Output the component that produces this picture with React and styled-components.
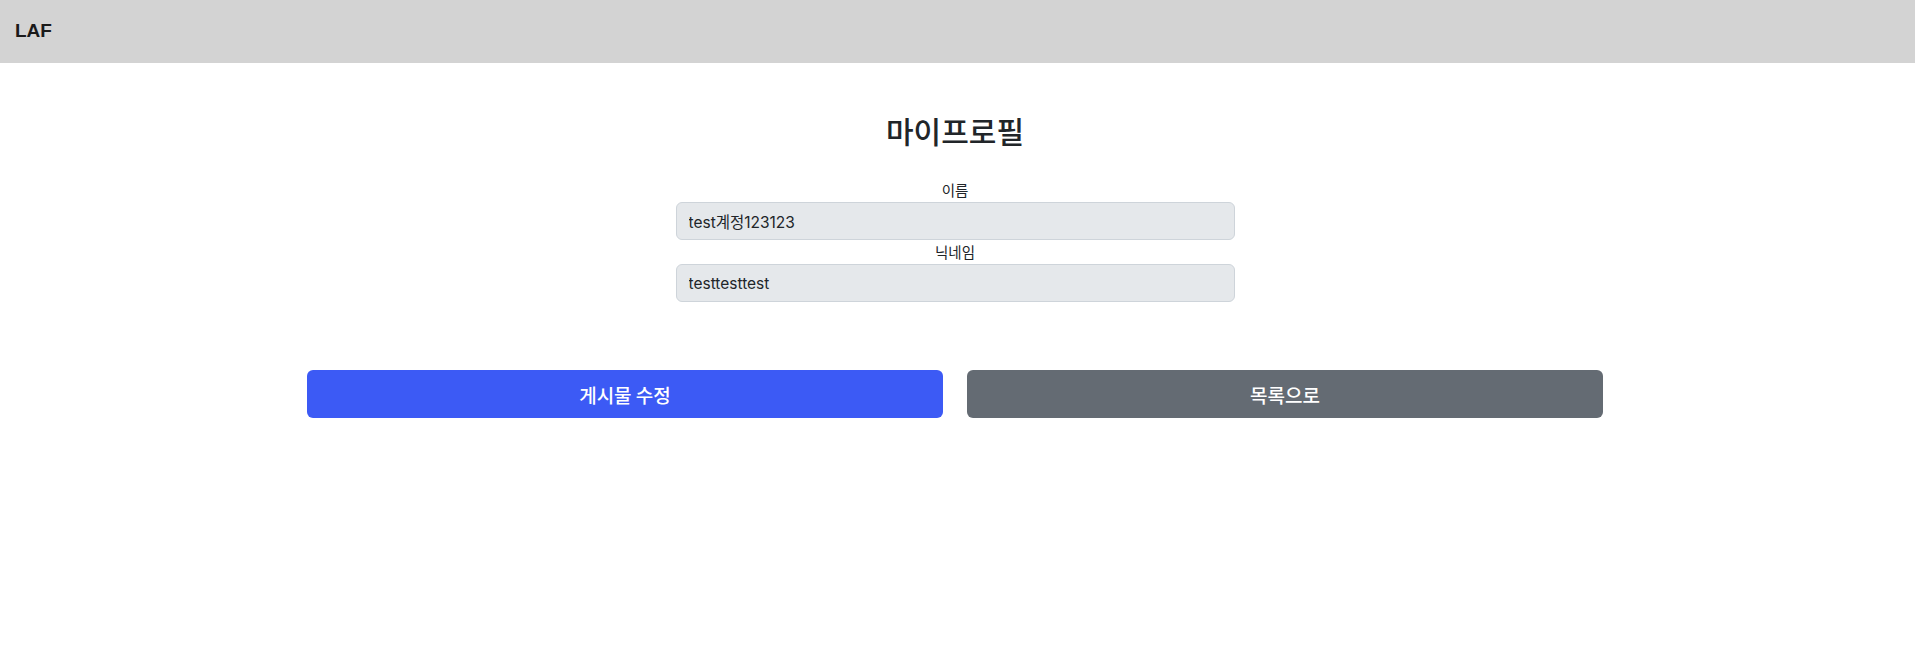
import React from 'react';
import styled, { createGlobalStyle } from 'styled-components';

const GlobalStyle = createGlobalStyle`
  * {
    box-sizing: border-box;
  }
  body {
    margin: 0;
    background: #ffffff;
    color: #212529;
    font-family: 'Inter', 'Noto Sans CJK KR', sans-serif;
    font-size: 16px;
    line-height: 1.5;
  }
`;

const Header = styled.header`
  height: 63px;
  background: #d3d3d3;
  display: flex;
  align-items: center;
  padding: 0 15px;

  h1 {
    margin: 0;
    font-family: 'Liberation Sans', Arial, sans-serif;
    font-size: 19px;
    font-weight: 700;
    color: #1a1a1a;
  }
`;

const Main = styled.main`
  padding: 50px 5px 0 0;
  display: flex;
  flex-direction: column;
  align-items: center;
`;

const Title = styled.h3`
  margin: 0 0 31px;
  font-family: 'Noto Sans CJK KR', sans-serif;
  font-size: 30px;
  font-weight: 500;
  line-height: 34px;
  color: #212529;
`;

const Form = styled.div`
  width: 559px;
  display: flex;
  flex-direction: column;
`;

const Label = styled.label`
  display: block;
  text-align: center;
  font-family: 'Noto Sans CJK KR', sans-serif;
  font-size: 14.5px;
  line-height: 24px;
  color: #212529;
`;

const Input = styled.input`
  display: block;
  width: 100%;
  height: 38px;
  padding: 0 12px;
  font-family: 'Inter', 'Noto Sans CJK KR', sans-serif;
  font-size: 15.5px;
  color: #212529;
  background: #e5e8eb;
  border: 1px solid #ced4da;
  border-radius: 6px;
  outline: none;
`;

const ButtonRow = styled.div`
  width: 1296px;
  margin-top: 68px;
  display: grid;
  grid-template-columns: 1fr 1fr;
  gap: 24px;
`;

const Button = styled.button`
  height: 48px;
  border: none;
  border-radius: 6px;
  background: ${p => (p.$variant === 'secondary' ? '#646b73' : '#3c5af5')};
  color: #ffffff;
  font-family: 'Noto Sans CJK KR', sans-serif;
  font-size: 19px;
  font-weight: 500;
  cursor: pointer;
`;

const App = () => (
  <>
    <GlobalStyle />
    <Header>
      <h1>LAF</h1>
    </Header>
    <Main>
      <Title>마이프로필</Title>
      <Form>
        <Label>이름</Label>
        <Input readOnly value="test계정123123" />
        <Label>닉네임</Label>
        <Input readOnly value="testtesttest" />
      </Form>
      <ButtonRow>
        <Button>게시물 수정</Button>
        <Button $variant="secondary">목록으로</Button>
      </ButtonRow>
    </Main>
  </>
);

export default App;
